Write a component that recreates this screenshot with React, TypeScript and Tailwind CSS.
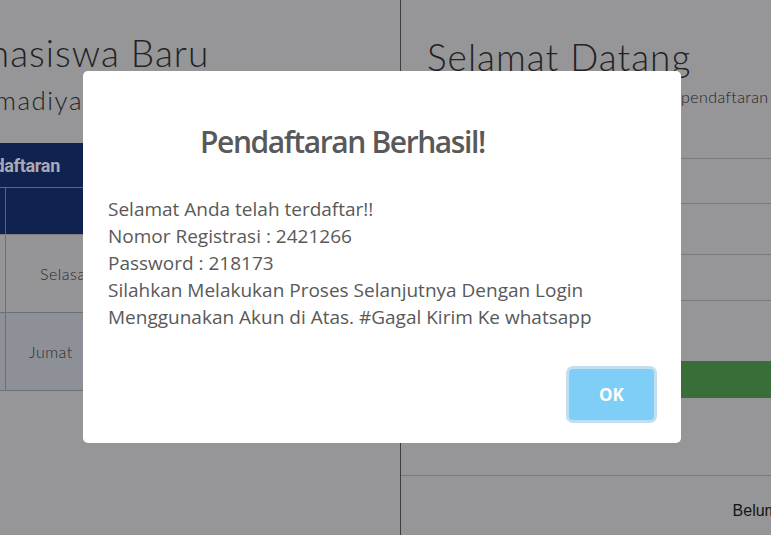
const heading = { fontFamily: '"Lato", "Noto Sans", sans-serif' };

function LeftPanel() {
	return (
		<div className="w-[401px] shrink-0 h-full border-r border-[#3d3d40] overflow-hidden">
			<div className="pt-[31px] whitespace-nowrap text-[#222325] font-light" style={heading}>
				<p className="text-[37px] leading-[44px] tracking-[1px] ml-[-64px]">Mahasiswa Baru</p>
				<p className="text-[26px] leading-[34px] tracking-[1.5px] mt-[8px] ml-[-98px]">Muhammadiyah</p>
			</div>
			<div className="mt-[26px] w-[420px]">
				<div className="h-[45px] bg-[#10224f] border-b border-[#56648a] flex items-center">
					<span className="ml-[-36px] text-[18px] font-bold text-[#a9abb3] font-['Roboto',sans-serif] tracking-[-0.3px]">
						Pendaftaran
					</span>
				</div>
				<div className="h-[46px] bg-[#10224f] flex">
					<div className="w-[6px] border-r border-[#56648a]" />
					<div className="flex-1" />
				</div>
				<div className="h-[78px] bg-[#959597] flex border-t border-[#7c7c80]">
					<div className="w-[6px] border-r border-[#6f6f73]" />
					<div className="flex-1 flex items-center pl-[34px] text-[16px] tracking-[0.5px] text-[#2a2b2d] font-light" style={heading}>
						Selasa
					</div>
				</div>
				<div className="h-[79px] bg-[#8d9096] flex border-t border-b border-[#707074]">
					<div className="w-[6px] border-r border-[#6f6f73]" />
					<div className="flex-1 flex items-center pl-[23px] text-[16px] tracking-[0.5px] text-[#2a2b2d] font-light" style={heading}>
						Jumat
					</div>
				</div>
			</div>
		</div>
	);
}

function RightPanel() {
	return (
		<div className="flex-1 h-full overflow-hidden flex flex-col">
			<div className="pl-[26px] pt-[35px] whitespace-nowrap text-[#222325] font-light" style={heading}>
				<p className="text-[37px] leading-[44px] tracking-[1px]">Selamat Datang</p>
				<p className="text-[16px] leading-[22px] tracking-[0.4px] mt-[7px]">
					<span className="inline-block w-[254px] overflow-hidden align-bottom">Silahkan login untuk melanjutkan</span>
					pendaftaran
				</p>
			</div>
			<div className="pl-[26px] mt-[50px] w-[420px]">
				<div className="h-[46px] border-y border-[#7a7a7d]" />
				<div className="h-[50px]" />
				<div className="h-[47px] border-y border-[#7a7a7d]" />
				<div className="h-[60px]" />
				<div className="h-[37px] bg-[#3a6e39] rounded-[3px]" />
			</div>
			<div className="mt-[77px] border-t border-[#7a7a7d] flex justify-end pt-[23px]">
				<span className="text-[16px] text-[#141414] font-['Liberation_Sans',sans-serif] mr-[-103px]">Belum punya akun?</span>
			</div>
		</div>
	);
}

function SuccessModal() {
	return (
		<div className="absolute left-[83px] top-[71px] w-[598px] h-[372px] bg-white rounded-[5px] flex flex-col font-['Open_Sans',sans-serif]">
			<h2 className="pl-[117px] text-[30px] tracking-[-1.4px] font-semibold text-[#595959] mt-[51px] leading-[40px]">
				Pendaftaran Berhasil!
			</h2>
			<div className="mt-[34px] px-[25px] text-[19px] leading-[27px] text-[#595959]">
				<p>Selamat Anda telah terdaftar!!</p>
				<p>Nomor Registrasi : 2421266</p>
				<p>Password : 218173</p>
				<p>Silahkan Melakukan Proses Selanjutnya Dengan Login</p>
				<p>Menggunakan Akun di Atas. #Gagal Kirim Ke whatsapp</p>
			</div>
			<div className="flex justify-end pr-[24px] mt-auto mb-[20px]">
				<button className="w-[91px] h-[57px] rounded-[7px] border-[3px] border-[#c2def1] bg-[#7ecef8] text-white text-[17px] font-bold">
					OK
				</button>
			</div>
		</div>
	);
}

export default function App() {
	return (
		<div className="relative w-[771px] h-[535px] overflow-hidden bg-[#969698]">
			<div className="flex h-full">
				<LeftPanel />
				<RightPanel />
			</div>
			<SuccessModal />
		</div>
	);
}
